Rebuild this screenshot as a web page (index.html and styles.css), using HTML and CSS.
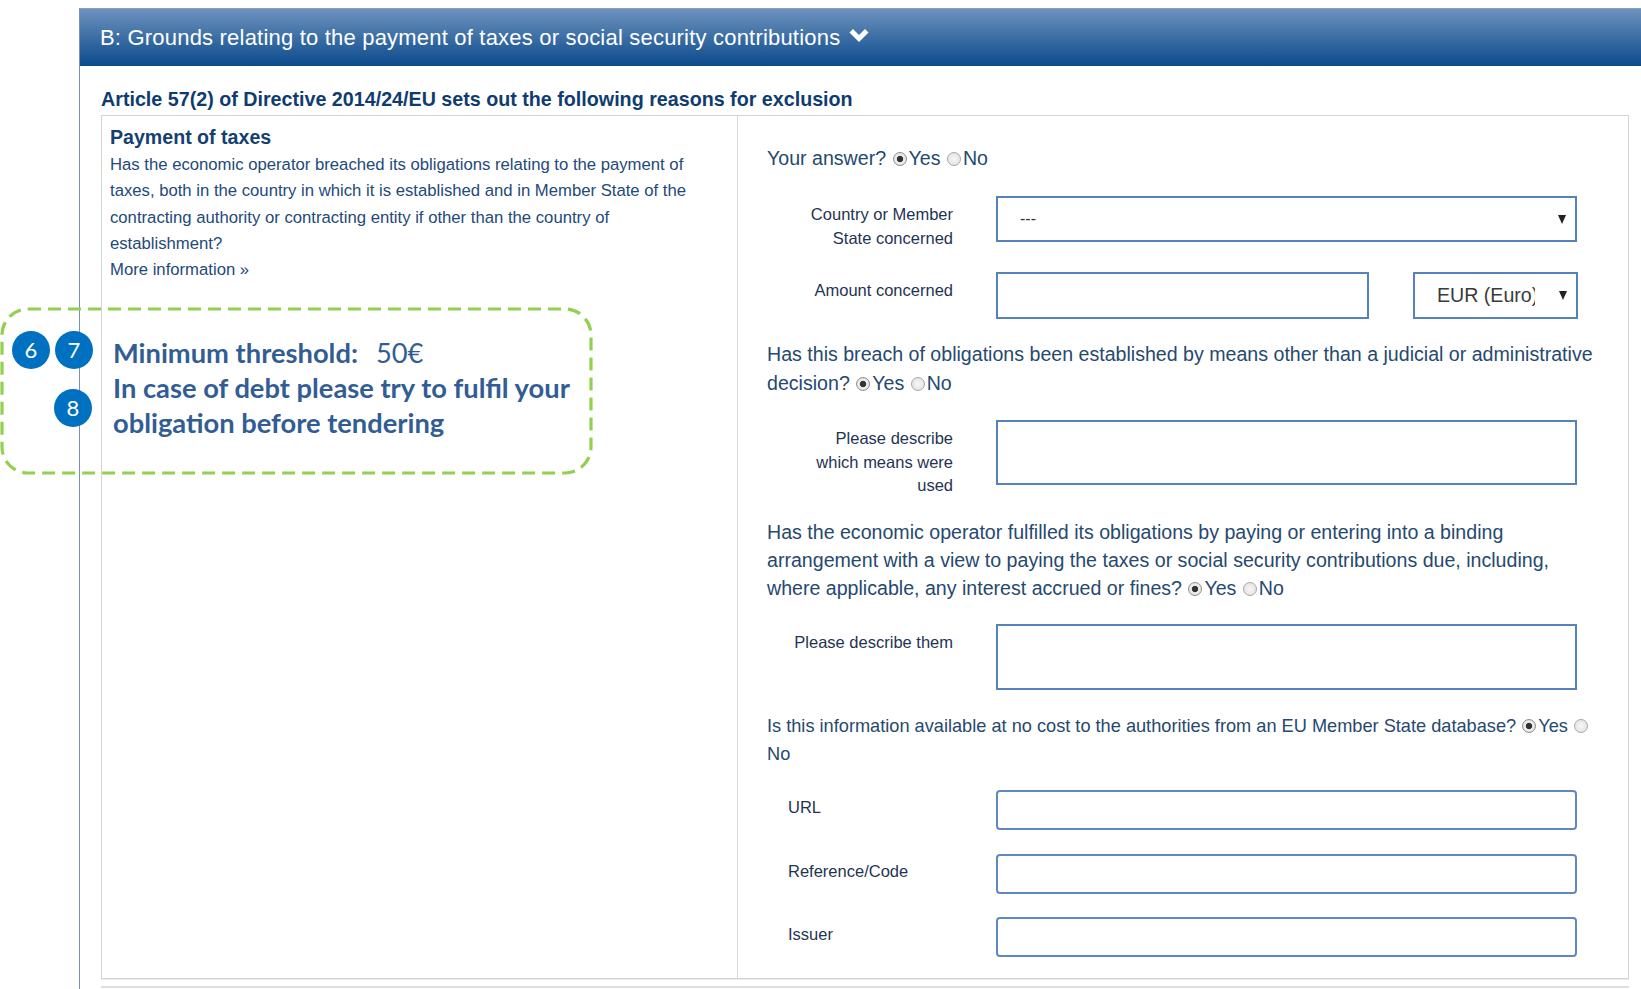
FILE: index.html
```html
<!DOCTYPE html>
<html>
<head>
<meta charset="utf-8">
<title>ESPD - Grounds relating to the payment of taxes</title>
<link rel="stylesheet" href="styles.css">
</head>
<body>
<div class="panel">
  <div class="panel-head">
    <span class="panel-title">B: Grounds relating to the payment of taxes or social security contributions</span>
    <svg class="chev" viewBox="0 0 20 16" aria-hidden="true"><path d="M0.5 4.5 L4 1 L10 7 L16 1 L19.5 4.5 L10 14 Z" fill="#fff"/></svg>
  </div>
  <div class="panel-body">
    <h3 class="article">Article 57(2) of Directive 2014/24/EU sets out the following reasons for exclusion</h3>
    <div class="crit">
      <div class="crit-desc">
        <h4 class="crit-title">Payment of taxes</h4>
        <p class="crit-text">Has the economic operator breached its obligations relating to the payment of taxes, both in the country in which it is established and in Member State of the contracting authority or contracting entity if other than the country of establishment?</p>
        <a class="more">More information &raquo;</a>
      </div>
      <div class="crit-form">
        <p class="q q-answer">Your answer? <span class="radio on"></span>Yes <span class="radio"></span>No</p>

        <div class="frow row-country">
          <label class="flabel">Country or Member<br>State concerned</label>
          <div class="select sel-wide"><span class="sel-text">---</span><i class="caret"></i></div>
        </div>

        <div class="frow row-amount">
          <label class="flabel">Amount concerned</label>
          <div class="field amount"></div>
          <div class="select sel-cur"><span class="sel-text cur-text">EUR (Euro)</span><i class="caret"></i></div>
        </div>

        <p class="q q-means">Has this breach of obligations been established by means other than a judicial or administrative<br>decision? <span class="radio on"></span>Yes <span class="radio"></span>No</p>

        <div class="frow row-means">
          <label class="flabel">Please describe<br>which means were<br>used</label>
          <div class="field area"></div>
        </div>

        <p class="q q-fulfil">Has the economic operator fulfilled its obligations by paying or entering into a binding<br>arrangement with a view to paying the taxes or social security contributions due, including,<br>where applicable, any interest accrued or fines? <span class="radio on"></span>Yes <span class="radio"></span>No</p>

        <div class="frow row-them">
          <label class="flabel">Please describe them</label>
          <div class="field area area-them"></div>
        </div>

        <p class="q q-db">Is this information available at no cost to the authorities from an EU Member State database? <span class="radio on"></span>Yes <span class="radio"></span><br>No</p>

        <div class="frow frow-left row-url">
          <label class="flabel">URL</label>
          <div class="field rounded"></div>
        </div>
        <div class="frow frow-left row-ref">
          <label class="flabel">Reference/Code</label>
          <div class="field rounded"></div>
        </div>
        <div class="frow frow-left row-issuer">
          <label class="flabel">Issuer</label>
          <div class="field rounded"></div>
        </div>
      </div>
    </div>
    <div class="next-crit"></div>
  </div>
</div>

<div class="annot">
  <svg class="annot-box" viewBox="0 0 594 170" aria-hidden="true"><rect x="2" y="2" width="589" height="164" rx="26" ry="26" fill="none" stroke="#92d050" stroke-width="3.2" stroke-dasharray="13 7"/></svg>
  <span class="badge b6">6</span>
  <span class="badge b7">7</span>
  <span class="badge b8">8</span>
  <div class="annot-text">
    <div>Minimum threshold:<span class="annot-val">50€</span></div>
    <div>In case of debt please try to fulfil your</div>
    <div>obligation before tendering</div>
  </div>
</div>
</body>
</html>
```
FILE: styles.css
```css
* { box-sizing: border-box; }
html, body { margin: 0; }
body {
  position: relative;
  width: 1641px;
  height: 989px;
  overflow: hidden;
  background: #fff;
  font-family: "Liberation Sans", Arial, sans-serif;
}

/* ---------- panel ---------- */
.panel {
  margin: 8px 0 0 79px;
  width: 1600px;
  min-height: 981px;
  border-left: 1px solid #7393bb;
}
.panel-head {
  height: 58px;
  display: flex;
  align-items: center;
  gap: 9px;
  padding-left: 20px;
  background: linear-gradient(#6d92bd, #0b4a8c);
  border-top: 1px solid #86a3c6;
  color: #fff;
  font-size: 22px;
  letter-spacing: 0.2px;
}
.chev { width: 20px; height: 16px; margin-top: -4px; }
.panel-body { padding-left: 21px; }
.article {
  margin: 0 0 4px;
  padding-top: 21px;
  font-size: 19.7px;
  line-height: 24px;
  font-weight: 700;
  color: #0f3c70;
}

/* ---------- criterion table ---------- */
.crit {
  width: 1528px;
  display: grid;
  grid-template-columns: 636px 1fr;
  border: 1px solid #d4d4d4;
  box-shadow: 0 1px 0 #ececec;
}
.crit-desc {
  border-right: 1px solid #d9d9d9;
  padding: 9px 10px 0 8px;
  color: #24497a;
}
.crit-title {
  margin: 0;
  font-size: 19.6px;
  line-height: 24px;
  font-weight: 700;
  color: #143f6f;
}
.crit-text {
  margin: 3px 0 0;
  max-width: 600px;
  font-size: 16.7px;
  line-height: 26.3px;
}
.more {
  display: block;
  font-size: 16.7px;
  line-height: 26.3px;
  color: #24497a;
}

.crit-form {
  padding: 28px 26px 21px 29px;
  color: #26496f;
}
.q { margin: 0; font-size: 19.6px; line-height: 28px; }
.q-means { margin-top: 20.5px; line-height: 29px; }
.q-fulfil { margin-top: 20.5px; line-height: 28px; }
.q-db { margin-top: 22px; font-size: 18.2px; line-height: 28px; }

.radio {
  display: inline-block;
  width: 14px;
  height: 14px;
  margin: 0 2px 0 1px;
  vertical-align: -1px;
  border: 1px solid #a8a8a8;
  border-radius: 50%;
  background: radial-gradient(circle, #f7f7f7 0, #dedede 100%);
}
.radio.on {
  background: radial-gradient(circle, #333 0 2.8px, #efefef 3.6px, #d6d6d6 100%);
  border-color: #8f8f8f;
}

/* ---------- form rows ---------- */
.frow {
  display: flex;
  align-items: flex-start;
  gap: 43px;
}
.flabel {
  flex: 0 0 186px;
  padding-top: 7px;
  text-align: right;
  font-size: 16.5px;
  line-height: 23.5px;
  color: #1f3453;
}
.frow-left .flabel { text-align: left; padding-left: 21px; padding-top: 6px; }

.row-country { margin-top: 24px; }
.row-amount  { margin-top: 22px; }
.row-means   { margin-top: 22.5px; }
.row-them    { margin-top: 22px; }
.row-url     { margin-top: 22px; }
.row-ref     { margin-top: 24px; }
.row-issuer  { margin-top: 23px; }

.field, .select {
  border: 2px solid #5482bb;
  background: #fff;
}
.field { width: 581px; height: 47px; }
.field.amount { width: 373px; }
.field.area { height: 65px; }
.field.area-them { height: 66px; }
.field.rounded { height: 40px; border-radius: 4px; border-color: #5d89c2; }

.select {
  display: flex;
  align-items: center;
  justify-content: space-between;
  height: 46px;
  padding: 0 9px 0 22px;
  color: #333;
}
.sel-wide { width: 581px; }
.sel-text { font-size: 16px; }
.sel-cur { width: 165px; height: 47px; margin-left: 1px; padding-left: 22px; }
.cur-text {
  display: block;
  width: 98px;
  overflow: hidden;
  white-space: nowrap;
  font-size: 19.6px;
  color: #3a3a3a;
}
.caret {
  width: 0;
  height: 0;
  border-left: 4px solid transparent;
  border-right: 4px solid transparent;
  border-top: 9px solid #222;
}

.next-crit {
  width: 1528px;
  margin-top: 7px;
  border-top: 2px solid #dedede;
}

/* ---------- annotation overlay ---------- */
.annot {
  position: absolute;
  left: 0;
  top: 307px;
  width: 594px;
  height: 170px;
  z-index: 5;
}
.annot-box { position: absolute; left: 0; top: 0; width: 594px; height: 170px; }
.badge {
  position: absolute;
  width: 38px;
  height: 38px;
  border-radius: 50%;
  background: #0070c0;
  color: #fff;
  font-family: "Lato", "Liberation Sans", sans-serif;
  font-size: 22px;
  line-height: 38px;
  text-align: center;
}
.b6 { left: 12px; top: 24px; }
.b7 { left: 55px; top: 24px; }
.b8 { left: 54px; top: 82px; }
.annot-text {
  position: absolute;
  left: 113px;
  top: 28px;
  font-family: "Lato", "Liberation Sans", sans-serif;
  font-weight: 700;
  font-size: 27.3px;
  line-height: 35px;
  color: #325d94;
  white-space: nowrap;
}
.annot-val { font-weight: 400; margin-left: 18px; }
```
